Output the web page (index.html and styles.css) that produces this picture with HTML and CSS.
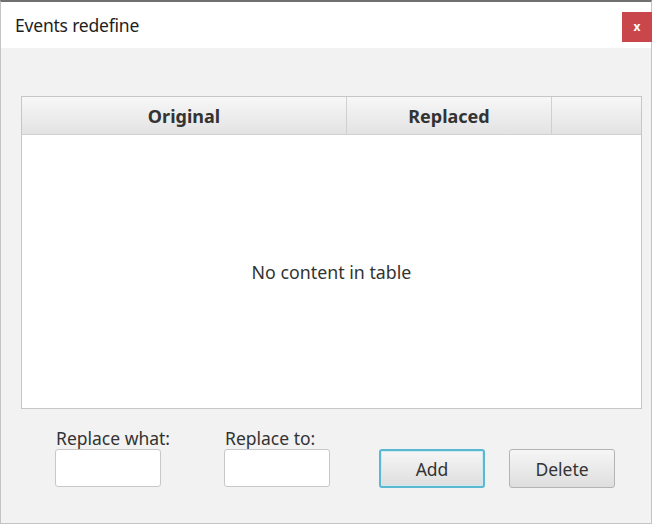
FILE: index.html
```html
<!DOCTYPE html>
<html>
<head>
<meta charset="utf-8">
<link rel="stylesheet" href="styles.css">
</head>
<body>
<div class="window">
  <div class="titlebar">
    <span class="title">Events redefine</span>
    <button class="close">x</button>
  </div>
  <div class="content">
    <div class="table">
      <div class="thead">
        <div class="th col1">Original</div>
        <div class="th col2">Replaced</div>
        <div class="th col3"></div>
      </div>
      <div class="tbody">No content in table</div>
    </div>
    <div class="controls">
      <div class="field">
        <label class="label">Replace what:</label>
        <div class="input"></div>
      </div>
      <div class="field field2">
        <label class="label">Replace to:</label>
        <div class="input"></div>
      </div>
      <button class="btn btn-add">Add</button>
      <button class="btn btn-delete">Delete</button>
    </div>
  </div>
</div>
</body>
</html>
```

FILE: styles.css
```css
html, body {
  margin: 0;
  padding: 0;
  background: #ffffff;
}
body {
  width: 656px;
  height: 526px;
  font-family: "Noto Sans", "Open Sans", sans-serif;
  color: #333333;
}
.window {
  box-sizing: border-box;
  width: 652px;
  height: 524px;
  border: 1px solid #c4c4c4;
  border-top: 2px solid #707070;
  background: #f2f2f2;
  display: flex;
  flex-direction: column;
}
.titlebar {
  height: 46px;
  background: #ffffff;
  display: flex;
  align-items: flex-start;
  justify-content: space-between;
}
.title {
  margin: 11px 0 0 14px;
  font-size: 17.5px;
  color: #1e1e1e;
  letter-spacing: -0.2px;
}
.close {
  margin: 10px -1px 0 0;
  width: 30px;
  height: 30px;
  border: none;
  padding: 0;
  background: #c9474a;
  color: #ffffff;
  font-family: "Noto Sans", sans-serif;
  font-weight: bold;
  font-size: 12px;
  line-height: 28px;
}
.content {
  flex: 1;
  padding: 48px 10px 0 20px;
  display: flex;
  flex-direction: column;
}
.table {
  box-sizing: border-box;
  width: 621px;
  height: 313px;
  border: 1px solid #c6c6c6;
  background: #ffffff;
  display: flex;
  flex-direction: column;
}
.thead {
  height: 37px;
  display: flex;
  background: linear-gradient(#f7f7f7, #e3e3e3);
  border-bottom: 1px solid #d2d2d2;
}
.th {
  box-sizing: border-box;
  display: flex;
  align-items: center;
  justify-content: center;
  font-weight: bold;
  font-size: 18px;
  color: #333333;
  border-right: 1px solid #d0d0d0;
}
.col1 { width: 325px; }
.col2 { width: 205px; }
.col3 { flex: 1; border-right: none; }
.tbody {
  flex: 1;
  display: flex;
  align-items: center;
  justify-content: center;
  font-size: 17.8px;
  color: #333333;
}
.controls {
  display: flex;
  align-items: flex-end;
  padding: 18px 0 0 34px;
}
.field {
  width: 106px;
  display: flex;
  flex-direction: column;
}
.field2 {
  margin-left: 63px;
}
.label {
  font-size: 17.5px;
  line-height: 22px;
  color: #333333;
  padding-left: 1px;
  white-space: nowrap;
}
.input {
  box-sizing: border-box;
  width: 106px;
  height: 38px;
  background: #ffffff;
  border: 1px solid #c8c8c8;
  border-radius: 3px;
}
.btn {
  box-sizing: border-box;
  width: 106px;
  height: 39px;
  margin-bottom: -1px;
  border: 1px solid #b4b4b4;
  border-radius: 3px;
  background: linear-gradient(#f6f6f6, #dedede);
  font-family: "Noto Sans", "Open Sans", sans-serif;
  font-size: 17.5px;
  color: #333333;
  padding: 0;
}
.btn-add {
  margin-left: 49px;
  border: 2px solid #5ab8d2;
  box-shadow: inset 0 0 0 1px #cfe9f1;
}
.btn-delete {
  margin-left: 24px;
}
```
